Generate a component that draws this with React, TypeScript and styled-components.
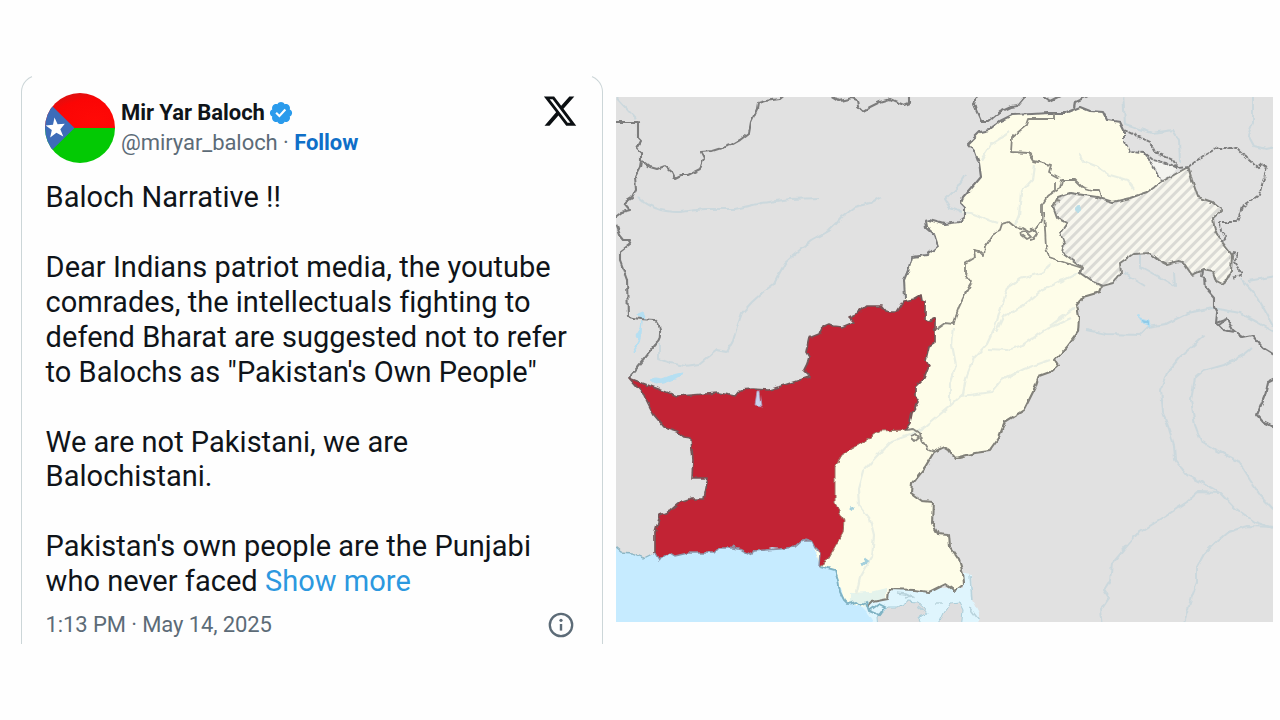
import React from "react";
import styled, { createGlobalStyle } from "styled-components";

const GlobalStyle = createGlobalStyle`
  * { box-sizing: border-box; }
  body { margin: 0; background: #fefefe; font-family: Roboto, "Liberation Sans", sans-serif; }
`;

const Page = styled.main`
  display: flex;
  align-items: flex-start;
  gap: 13px;
  width: 1280px;
  height: 720px;
  padding: 75px 0 0 21px;
  overflow: hidden;
`;

const Card = styled.article`
  position: relative;
  display: flex;
  flex-direction: column;
  width: 582px;
  height: 569px;
  padding: 17px 24px 0 23px;
  border: 1px solid #ccd6d8;
  border-bottom: 0;
  border-radius: 17px 17px 0 0;
  color: #0f1419;

  &::before {
    content: "";
    position: absolute;
    top: -1px;
    left: 10px;
    right: 10px;
    height: 2px;
    background: #fefefe;
  }
`;

const Header = styled.header`
  display: flex;
  align-items: flex-start;
  height: 71px;
`;

const Avatar = styled.svg`
  width: 70px;
  height: 70px;
  flex: none;
`;

const Identity = styled.div`
  display: flex;
  flex-direction: column;
  flex: 1;
  padding: 5px 0 0 6px;
`;

const IdentityRow = styled.div`
  display: flex;
  align-items: center;
  height: 30px;
  font-size: 22px;
  line-height: 30px;
  letter-spacing: -0.06px;
  white-space: pre;
`;

const Name = styled.span`
  font-weight: 700;
`;

const Handle = styled.span`
  color: #5c6b77;
`;

const Follow = styled.a`
  color: #0f6fc8;
  font-weight: 700;
`;

const Badge = styled.svg`
  width: 26px;
  height: 26px;
  margin-left: 3px;
`;

const XLogo = styled.svg`
  width: 36px;
  height: 36px;
`;

const Body = styled.div`
  display: flex;
  flex-direction: column;
  gap: 35px;
  padding: 16px 0 0 0.6px;
  font-size: 29px;
  line-height: 34.9px;
  letter-spacing: 0.025px;
`;

const Paragraph = styled.p`
  margin: 0;
`;

const Line = styled.span`
  display: flex;
  white-space: pre;
`;

const ShowMore = styled.a`
  color: #2c98df;
`;

const Footer = styled.footer`
  display: flex;
  align-items: center;
  justify-content: space-between;
  height: 30px;
  margin-top: 10px;
  padding: 0 4px 0 0.6px;
  color: #5c6b77;
  font-size: 22px;
  letter-spacing: -0.1px;
`;

const InfoIcon = styled.svg`
  width: 26px;
  height: 26px;
  margin-top: 2px;
`;

const MapFigure = styled.svg`
  display: block;
  flex: none;
  width: 657px;
  height: 525px;
  margin-top: 22px;
`;

const PAKISTAN =
  "M905 299L904 280L909 268L912 257L927 255L938 246L934 234L926 227L925 221L929 220L944 224L959 222L965 217L965 207L961 203L963 198L970 190L981 177L979 163L975 152L968 144L980 132L989 130L1000 121L1012 115L1032 114L1049 113L1065 113L1080 107L1090 111L1103 112L1107 120L1120 122L1124 130L1124 142L1130 152L1145 153L1150 163L1162 181L1147 192L1130 198L1113 202L1097 197L1070 193L1058 197L1053 207L1057 218L1067 223L1060 233L1064 243L1062 253L1082 268L1080 273L1093 282L1102 287L1100 292L1083 297L1077 305L1079 317L1078 332L1067 347L1055 360L1058 365L1050 372L1039 376L1035 388L1024 410L1005 422L999 437L989 451L975 453L955 458L949 450L944 447L934 452L925 467L912 483L911 493L922 501L933 502L932 523L938 534L949 535L950 547L959 560L963 573L964 584L955 591L945 584L929 592L915 590L889 589L888 599L872 602L867 607L854 605L844 600L839 580L835 570L820 566L800 500Z";

const BORDER_WEST =
  "M905 299L904 280L909 268L912 257L927 255L938 246L934 234L926 227L925 221L929 220L944 224L959 222L965 217L965 207L961 203L963 198L970 190L981 177L979 163L975 152L968 144L980 132L989 130L1000 121L1012 115L1032 114L1049 113L1065 113L1080 107L1090 111L1103 112L1107 120L1120 122L1124 130";

const BORDER_EAST =
  "M1102 287L1100 292L1083 297L1077 305L1079 317L1078 332L1067 347L1055 360L1058 365L1050 372L1039 376L1035 388L1024 410L1005 422L999 437L989 451L975 453L955 458L949 450L944 447L934 452L925 467L912 483L911 493L922 501L933 502L932 523L938 534L949 535L950 547L959 560L963 573L964 584L955 591L945 584L929 592L915 590L889 589L888 599L872 602L867 607";

const BALOCHISTAN =
  "M629 378L645 384L677 396L719 393L735 396L740 390L752 389L769 390L809 377L809 375L804 370L807 364L809 357L806 352L809 338L819 334L822 327L829 324L834 326L842 327L854 322L849 317L858 313L867 306L882 306L886 311L890 312L897 312L904 301L914 299L921 295L922 301L925 302L925 319L928 321L935 318L935 343L929 347L926 360L929 365L924 378L915 387L915 395L919 402L912 413L910 423L905 430L879 431L862 443L842 455L835 467L835 503L844 520L843 533L832 553L828 560L819 566L820 552L815 547L812 541L802 541L795 547L780 549L772 548L765 550L754 551L752 555L742 550L733 548L719 548L714 553L688 553L675 556L670 553L659 560L655 553L655 533L660 515L670 511L679 503L692 499L704 499L708 478L692 478L693 460L691 438L684 437L677 431L664 427L654 415L644 395Z";

const KASHMIR =
  "M1163 181L1188 167L1192 180L1198 197L1212 202L1222 210L1213 218L1215 230L1223 243L1232 255L1231 272L1227 280L1222 284L1216 281L1213 272L1203 270L1192 275L1183 262L1178 261L1167 264L1159 260L1150 253L1133 254L1120 263L1121 273L1113 283L1102 286L1093 282L1080 273L1082 268L1062 253L1064 243L1060 233L1067 223L1057 218L1053 207L1058 197L1070 193L1097 197L1113 202L1130 198L1147 192Z";

const BORDERS = [
  "M612 122H638V138L641 141L637 148L641 152L641 161L640 167L635 177L636 190L632 198L624 203L630 210L622 212L614 218",
  "M615 221L620 235L624 240L631 240L629 245L620 252L620 261L627 280L628 317L640 319L654 320Q661 325 660 334Q660 341 657 343L629 378",
  "M642 161L650 167L657 169L665 166L672 172L675 178L681 175L688 175L700 169L704 158L701 152L712 151L731 145L740 140L749 133L751 122L757 109L758 103L765 101L780 99L786 94",
  "M830 95L840 101L852 98L857 100L858 106L863 111L870 107L880 102L890 99L899 103L904 105L909 103L909 94",
  "M977 94L974 103L976 110L981 121L989 121L1000 112L1011 107L1017 106L1027 94",
  "M1041 94L1050 101L1062 95M1074 108L1075 102L1088 96",
  "M1202 271L1201 277L1205 278L1206 289L1214 298L1214 307L1217 313L1216 323L1227 319L1233 330L1242 337L1252 335L1263 348L1276 356",
  "M1217 324L1223 330L1235 332M1219 325L1227 319",
  "M1276 378L1268 382L1265 395L1261 405L1257 415L1263 422L1277 429",
];

const DASHED = [
  "M1124 130L1150 142L1155 152L1173 160L1178 168L1188 167L1203 156L1217 148L1237 148L1249 160L1258 168L1263 164L1267 167L1264 178L1259 195L1242 207L1237 222L1217 222",
  "M1124 130L1124 142L1130 152L1145 153L1153 160L1166 163L1178 168M1145 153L1162 181",
  "M1220 223L1221 231L1226 237L1221 243M1232 253L1238 254L1234 262L1242 274L1233 278",
];

const PROVINCES = [
  "M935 330L945 323L954 324L956 315L959 307L966 292L972 282L965 273L965 263L975 257L974 250L979 251L984 256L985 247L994 233L1000 230L1002 224L1009 222L1015 227L1022 228L1029 232L1036 229L1042 220",
  "M1022 235Q1020 230 1026 232L1031 237L1027 239ZM1030 230Q1035 228 1037 234Q1034 240 1030 240",
  "M1042 220L1042 205L1047 197L1056 190L1060 188L1062 180L1075 180L1082 187L1092 190L1100 190L1102 198",
  "M1044 212L1046 247L1049 257L1060 261L1082 268",
  "M1054 113L1054 119H1029L1027 125L1012 137L1011 152L1029 153L1034 161L1051 165L1049 172L1060 178",
  "M1055 190L1055 182M1060 201Q1056 198 1054 207",
  "M905 430L914 429L920 433L921 439L925 445L928 450L934 452",
  "M911 436L916 434L919 437L914 441L911 438",
];

const RIVERS = [
  "M638 197Q655 213 680 212L705 209H735L762 203L790 199L820 198",
  "M612 93L636 119",
  "M881 197L870 203L855 207L842 217L836 224L829 231L811 241L795 254L785 263L779 274L774 284L763 292L752 302L742 313L737 327L733 341L727 352L717 350L700 364L685 366L670 363L659 359V344",
  "M1123 93L1125 124L1152 133L1173 130L1179 140L1180 163",
  "M1253 93L1253 122L1248 135L1254 146L1266 149L1276 147",
  "M1086 330L1106 334L1140 335L1148 327L1166 324L1188 313L1212 308L1240 313L1257 322L1276 333",
  "M1205 335L1180 357L1167 373L1161 389L1163 412L1169 429L1174 445L1175 460L1187 475L1205 484L1221 493L1235 508L1255 522L1276 529",
  "M1251 349L1245 354L1224 365L1203 371L1195 378L1191 400L1195 425L1201 441L1216 450L1238 461L1250 480L1260 495L1276 512",
  "M1219 493L1198 492L1187 502L1161 519L1137 534L1126 547L1112 564L1110 580L1104 590L1109 598L1101 610L1103 626",
  "M1276 527L1247 526L1228 532L1217 541L1204 554L1197 567L1197 583L1190 602L1183 626",
  "M1141 255V267L1175 286L1174 273M1124 273L1145 286M1240 278L1258 298L1274 327M1248 281L1276 276",
  "M965 175L957 188L945 200L950 208L962 212",
];

const PALE_RIVERS = [
  "M962 212L970 213L997 223M1034 165L1032 180L1021 192L1019 215L1015 225M1010 132L990 145L981 160",
  "M1050 263L1045 272L1020 279L1008 287L1002 305L995 327L987 344L974 358L966 378L963 394L950 406L926 426L912 434L890 442L875 458L863 471L858 489L859 505L870 519L874 535L872 557L860 578L856 595",
  "M1062 280L1042 290L1024 305L1003 317L996 332M1071 318L1045 330L1021 346L1007 350L988 349M1050 360L1024 369L1002 380L992 392L961 396M954 327L952 345L956 365L950 385V405",
  "M1080 152L1081 160L1098 167L1110 175L1127 180L1134 189",
  "M1060 282L1082 271M1050 326L1075 308",
];

const TweetHeader = () => (
  <Header>
    <Avatar viewBox="0 0 70 70">
      <defs>
        <clipPath id="avatar"><circle cx="35" cy="35" r="35" /></clipPath>
        <radialGradient id="shine" cx="0.72" cy="0.75" r="0.8">
          <stop offset="0" stopColor="#ff0906" />
          <stop offset="0.72" stopColor="#fb0505" />
          <stop offset="1" stopColor="#dc1010" />
        </radialGradient>
      </defs>
      <g clipPath="url(#avatar)">
        <rect width="70" height="35" fill="url(#shine)" />
        <rect y="35" width="70" height="35" fill="#03c904" />
        <path d="M-6 0L29.5 35L-6 70Z" fill="#3d6cb9" />
        <path d="M9.5 24.5L12.6 31.3L19.8 30.8L15.3 36.3L18.3 43.5L11.4 39.8L5.2 44.5L6.8 37L0.7 32.5L8 31.8Z" fill="#fff" />
      </g>
    </Avatar>
    <Identity>
      <IdentityRow>
        <Name>Mir Yar Baloch</Name>
        <Badge viewBox="0 0 22 22">
          <path fill="#2a9bec" d="M20.396 11c-.018-.646-.215-1.275-.57-1.816-.354-.54-.852-.972-1.438-1.246.223-.607.27-1.264.14-1.897-.131-.634-.437-1.218-.882-1.687-.47-.445-1.053-.75-1.687-.882-.633-.13-1.29-.083-1.897.14-.273-.587-.704-1.086-1.245-1.44S11.647 1.62 11 1.604c-.646.017-1.273.213-1.813.568s-.969.854-1.24 1.44c-.608-.223-1.267-.272-1.902-.14-.635.13-1.22.436-1.69.882-.445.47-.749 1.055-.878 1.688-.13.633-.08 1.29.144 1.896-.587.274-1.087.705-1.443 1.245-.356.54-.555 1.17-.574 1.817.02.647.218 1.276.574 1.817.356.54.856.972 1.443 1.245-.224.606-.274 1.263-.144 1.896.13.634.433 1.218.877 1.688.47.443 1.054.747 1.687.878.633.132 1.29.084 1.897-.136.274.586.705 1.084 1.246 1.439.54.354 1.17.551 1.816.569.647-.016 1.276-.213 1.817-.567s.972-.854 1.245-1.44c.604.239 1.266.296 1.903.164.636-.132 1.22-.447 1.68-.907.46-.46.776-1.044.908-1.681s.075-1.299-.165-1.903c.586-.274 1.084-.705 1.439-1.246.354-.54.551-1.17.569-1.816zM9.662 14.85l-3.429-3.428 1.293-1.302 2.072 2.072 4.4-4.794 1.347 1.246z" />
        </Badge>
      </IdentityRow>
      <IdentityRow>
        <Handle>@miryar_baloch · </Handle>
        <Follow>Follow</Follow>
      </IdentityRow>
    </Identity>
    <XLogo viewBox="0 0 24 24">
      <path fill="#0b0f12" d="M18.244 2.25h3.308l-7.227 8.26 8.502 11.24H16.17l-5.214-6.817L4.99 21.75H1.68l7.73-8.835L1.254 2.25H8.08l4.713 6.231zm-1.161 17.52h1.833L7.084 4.126H5.117z" />
    </XLogo>
  </Header>
);

const RegionMap = () => (
  <MapFigure viewBox="616 97 657 525" role="img" aria-label="Map of Balochistan">
    <defs>
      <pattern id="hatch" width="7" height="7" patternUnits="userSpaceOnUse" patternTransform="rotate(45)">
        <rect width="7" height="7" fill="#f8f7ee" />
        <rect width="3" height="7" fill="#dadad5" />
      </pattern>
      <filter id="terrain" x="606" y="87" width="677" height="545" filterUnits="userSpaceOnUse" colorInterpolationFilters="sRGB">
        <feTurbulence type="fractalNoise" baseFrequency="0.16" numOctaves="1" seed="4" result="noise" />
        <feDisplacementMap in="SourceGraphic" in2="noise" scale="5" xChannelSelector="R" yChannelSelector="G" />
        <feGaussianBlur stdDeviation="0.65" />
      </filter>
      <filter id="soft">
        <feGaussianBlur stdDeviation="0.65" />
      </filter>
    </defs>
    <rect x="616" y="97" width="657" height="525" fill="#e1e1e1" />
    <g filter="url(#terrain)">
      <rect x="600" y="80" width="690" height="560" fill="#e1e1e1" />
      <path d="M606 543L616 547L622 552L632 553L644 558L652 554L700 540H820L850 560L885 622V640H606Z" fill="#c6ebff" />
      <path d="M606 543L616 547L622 552L632 553L644 558L652 554" fill="none" stroke="#8eb6c4" strokeWidth="1.3" />
      <path d="M860 606L885 588H964V573L971 574L972 600L979 614L978 630H878L868 614Z" fill="#dff5fd" />
      <path d="M877 617L888 607L898 607L908 601L917 602L924 608L927 614L918 617L925 630H878Z" fill="#dededf" stroke="#a9cdd9" strokeWidth="1" />
      <path d="M936 630L944 613L951 603L959 602L963 610L961 630Z" fill="#dededf" stroke="#a9cdd9" strokeWidth="1" />
      <path d="M896 593L906 594L912 597L905 598M935 603H943M918 606L924 611M970 575L972 600M969 607L979 620" fill="none" stroke="#b9d3dc" strokeWidth="1.6" />
      <path d={PAKISTAN} fill="#fefde9" />
      <path d="M1145 153L1153 160L1166 163L1178 168L1163 181Z" fill="#f3f3ef" />
      <path d="M850 593L870 592L886 588V598L872 602L866 606L850 602Z" fill="#e4f3ec" />
      <g fill="none" stroke="#cbd8dd" strokeWidth="2" strokeLinejoin="round">
        {RIVERS.map((d) => <path key={d} d={d} />)}
      </g>
      <g fill="none" stroke="#e8eee3" strokeWidth="2.2" strokeLinejoin="round">
        {PALE_RIVERS.map((d) => <path key={d} d={d} />)}
      </g>
      <g fill="#b5dff2" stroke="#b5dff2" strokeLinejoin="round">
        <path d="M638 314L643 312L646 318L640 319Z" />
        <path d="M642 321L641 328L636 336L639 341L633 352L638 346L641 334Z" />
        <path d="M650 380L656 378L662 379L673 375L683 373L680 377L672 380L663 383L655 384Z" />
        <path d="M1137 313L1140 319L1149 321L1150 326L1141 322Z" fill="#8fcbe9" />
      </g>
    </g>
    <path d={KASHMIR} fill="url(#hatch)" filter="url(#soft)" />
    <g filter="url(#terrain)">
      <path d={KASHMIR} fill="none" stroke="#82827e" strokeWidth="2" strokeLinejoin="round" />
      <circle cx="1078" cy="209" r="3" fill="#b8dde8" />
      <g fill="none" stroke="#7c7c7c" strokeWidth="2.1" strokeLinejoin="round">
        {BORDERS.map((d) => <path key={d} d={d} />)}
        <path d={BORDER_WEST} />
        <path d={BORDER_EAST} stroke="#82817a" />
      </g>
      <g fill="none" stroke="#7c7c7c" strokeWidth="1.9" strokeDasharray="4 1">
        {DASHED.map((d) => <path key={d} d={d} />)}
      </g>
      <g fill="none" stroke="#8a8982" strokeWidth="1.8" strokeLinejoin="round">
        {PROVINCES.map((d) => <path key={d} d={d} />)}
      </g>
      <path d="M820 566L835 570L838 580L840 592L844 600L848 604L856 602L860 605L866 602L869 611L879 615L885 607L879 604L869 611" fill="none" stroke="#7fb2c3" strokeWidth="1.9" />
      <path d="M862 565L867 561L864 559M850 507L853 509" fill="none" stroke="#a5d0dc" strokeWidth="3" />
      <path d={BALOCHISTAN} fill="#c22334" />
      <path d="M655 553V533L660 515L670 511L679 503L692 499L704 499L708 478L692 478L693 460L691 438L684 437L677 431L664 427L654 415L644 395L629 378L645 384L677 396L719 393L735 396L740 390L752 389L769 390L809 377L809 375L804 370L807 364L809 357L806 352L809 338L819 334L822 327L829 324L834 326L842 327L854 322L849 317L858 313L867 306L882 306L886 311L890 312L897 312L904 301L914 299L921 295L922 301L925 302L925 319L928 321L935 318L935 343L929 347L926 360L929 365L924 378L915 387L915 395L919 402L912 413L910 423L905 430" fill="none" stroke="#745658" strokeWidth="1.7" strokeLinejoin="round" />
      <path d="M905 430L879 431L862 443L842 455L835 467V503L844 520L843 533L832 553L828 560L819 566" fill="none" stroke="#9c7164" strokeWidth="1" />
      <path d="M819 566L820 552L815 547L812 541L802 541L795 547L780 549L765 550L754 551L752 555L742 550L733 548L719 548L714 553L688 553L675 556L670 553L659 560L655 553M802 542L806 539L812 541M730 548L733 545L735 548" fill="none" stroke="#8b91a4" strokeWidth="1.4" />
      <path d="M757 391L760 391L762 406L755 405Z" fill="#c9d3ef" stroke="#b090b0" strokeWidth="0.8" />
    </g>
  </MapFigure>
);

export default function App() {
  return (
    <Page>
      <GlobalStyle />
      <Card>
        <TweetHeader />
        <Body>
          <Paragraph>
            <Line>Baloch Narrative !!</Line>
          </Paragraph>
          <Paragraph>
            <Line>Dear Indians patriot media, the youtube</Line>
            <Line>comrades, the intellectuals fighting to</Line>
            <Line>defend Bharat are suggested not to refer</Line>
            <Line>to Balochs as "Pakistan's Own People"</Line>
          </Paragraph>
          <Paragraph>
            <Line>We are not Pakistani, we are</Line>
            <Line>Balochistani.</Line>
          </Paragraph>
          <Paragraph>
            <Line>Pakistan's own people are the Punjabi</Line>
            <Line><span>{"who never faced "}</span><ShowMore>Show more</ShowMore></Line>
          </Paragraph>
        </Body>
        <Footer>
          <span>1:13 PM · May 14, 2025</span>
          <InfoIcon viewBox="0 0 26 26">
            <circle cx="13" cy="13" r="11.2" fill="none" stroke="#5c6b77" strokeWidth="2.3" />
            <circle cx="13" cy="8.3" r="1.6" fill="#5c6b77" />
            <path d="M13 12V18.6" stroke="#5c6b77" strokeWidth="2.4" />
          </InfoIcon>
        </Footer>
      </Card>
      <RegionMap />
    </Page>
  );
}
